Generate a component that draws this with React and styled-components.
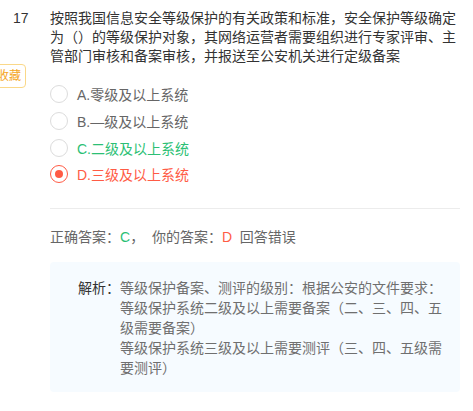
import React from 'react';
import styled, { createGlobalStyle } from 'styled-components';

const GlobalStyle = createGlobalStyle`
  body {
    margin: 0;
    background: #fff;
    font-family: "Liberation Sans", "Noto Sans CJK SC", sans-serif;
  }
`;

const Page = styled.div`
  width: 473px;
  height: 411px;
  padding-top: 9px;
  box-sizing: border-box;
  overflow: hidden;
`;

const Question = styled.div`
  display: flex;
`;

const Side = styled.div`
  width: 50px;
  flex-shrink: 0;
  display: flex;
  flex-direction: column;
  align-items: flex-start;
`;

const Number = styled.span`
  padding-left: 13px;
  font-size: 14px;
  line-height: 19px;
  color: #333;
`;

const CollectButton = styled.button`
  margin-top: 36px;
  margin-left: -8px;
  height: 24px;
  padding: 0 4px;
  border: 1px solid #fad889;
  border-radius: 4px;
  background: #fff;
  color: #f5a623;
  font-family: inherit;
  font-size: 12px;
  line-height: 22px;
`;

const Body = styled.div`
  width: 410px;
`;

const Stem = styled.p`
  margin: 0;
  font-size: 14px;
  line-height: 19px;
  color: #333;
`;

const Options = styled.ul`
  list-style: none;
  margin: 15px 0 0;
  padding: 0;
`;

const Option = styled.li`
  display: flex;
  align-items: center;
  gap: 9px;
  height: 26.7px;
  font-size: 14px;
  color: ${p => p.$color || '#666'};
`;

const Radio = styled.span`
  width: 16px;
  height: 16px;
  border-radius: 50%;
  border: 1px solid ${p => (p.$checked ? '#ff5b45' : '#dcdcdc')};
  display: flex;
  align-items: center;
  justify-content: center;
  &::after {
    content: '';
    width: 8px;
    height: 8px;
    border-radius: 50%;
    background: ${p => (p.$checked ? '#ff5b45' : 'transparent')};
  }
`;

const Divider = styled.hr`
  margin: 20px 0 0;
  border: 0;
  border-top: 1px solid #ececec;
`;

const Result = styled.div`
  margin-top: 18px;
  font-size: 14px;
  line-height: 20px;
  color: #666;
  white-space: pre;
`;

const Mark = styled.span`
  color: ${p => p.$color};
`;

const Analysis = styled.div`
  margin-top: 15px;
  display: flex;
  padding: 16px 16px 14px 0;
  background: #f6fbff;
  border-radius: 4px;
  font-size: 14px;
  line-height: 20px;
`;

const Label = styled.span`
  width: 70px;
  flex-shrink: 0;
  text-align: right;
  color: #333;
`;

const AnalysisText = styled.div`
  color: #6f6f6f;
`;

const options = [
  { key: 'A', text: 'A.零级及以上系统' },
  { key: 'B', text: 'B.—级及以上系统' },
  { key: 'C', text: 'C.二级及以上系统', color: '#2cbf75' },
  { key: 'D', text: 'D.三级及以上系统', color: '#ff5b45', checked: true },
];

export default function App() {
  return (
    <Page>
      <GlobalStyle />
      <Question>
        <Side>
          <Number>17</Number>
          <CollectButton>收藏</CollectButton>
        </Side>
        <Body>
          <Stem>
            按照我国信息安全等级保护的有关政策和标准，安全保护等级确定为（）的等级保护对象，其网络运营者需要组织进行专家评审、主管部门审核和备案审核，并报送至公安机关进行定级备案
          </Stem>
          <Options>
            {options.map(o => (
              <Option key={o.key} $color={o.color}>
                <Radio $checked={o.checked} />
                {o.text}
              </Option>
            ))}
          </Options>
          <Divider />
          <Result>
            正确答案：<Mark $color="#2cbf75">C</Mark>，  你的答案：<Mark $color="#ff5b45">D</Mark>  回答错误
          </Result>
          <Analysis>
            <Label>解析：</Label>
            <AnalysisText>
              等级保护备案、测评的级别：根据公安的文件要求：
              <br />
              等级保护系统二级及以上需要备案（二、三、四、五级需要备案）
              <br />
              等级保护系统三级及以上需要测评（三、四、五级需要测评）
            </AnalysisText>
          </Analysis>
        </Body>
      </Question>
    </Page>
  );
}
